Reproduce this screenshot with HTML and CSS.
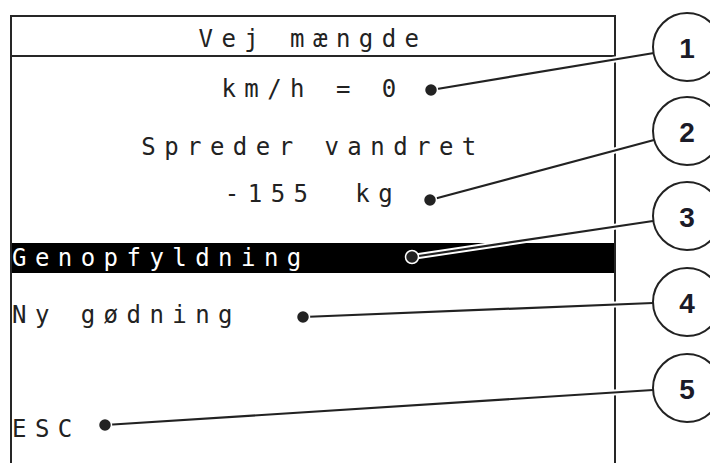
FILE: index.html
```html
<!DOCTYPE html>
<html>
<head>
    <meta charset="utf-8">
    <title>Vej mængde</title>
    <link rel="stylesheet" href="styles.css">
</head>
<body>
    <div class="figure">
        <div class="screen">
            <div class="title">Vej mængde</div>
            <div class="info">
                <div class="speed">km/h = 0</div>
                <div class="status">Spreder vandret</div>
                <div class="weight">-155 <span class="unit">kg</span></div>
            </div>
            <div class="menu">
                <div class="item selected">Genopfyldning</div>
                <div class="item">Ny gødning</div>
                <div class="item empty"></div>
                <div class="item">ESC</div>
            </div>
        </div>
        <svg class="callouts" width="710" height="463" viewBox="0 0 710 463">
            <g class="halo">
                <line x1="431" y1="90" x2="654" y2="53"/>
                <line x1="430" y1="200" x2="654" y2="140"/>
                <line x1="412" y1="257" x2="653" y2="221"/>
                <line x1="303" y1="317" x2="653" y2="303"/>
                <line x1="105" y1="425" x2="653" y2="390"/>
            </g>
            <g class="leader">
                <line x1="431" y1="90" x2="654" y2="53"/>
                <line x1="430" y1="200" x2="654" y2="140"/>
                <line x1="412" y1="257" x2="653" y2="221"/>
                <line x1="303" y1="317" x2="653" y2="303"/>
                <line x1="105" y1="425" x2="653" y2="390"/>
            </g>
            <g class="dot">
                <circle cx="431" cy="90" r="6.5"/>
                <circle cx="430" cy="200" r="6.5"/>
                <circle cx="412" cy="257" r="6.5"/>
                <circle cx="303" cy="317" r="6.5"/>
                <circle cx="105" cy="425" r="6.5"/>
            </g>
            <g class="badge">
                <circle cx="687" cy="47" r="34"/>
                <circle cx="687" cy="131" r="34"/>
                <circle cx="687" cy="216" r="34"/>
                <circle cx="687" cy="302" r="34"/>
                <circle cx="687" cy="388" r="34"/>
                <text x="687" y="58">1</text>
                <text x="687" y="142">2</text>
                <text x="687" y="227">3</text>
                <text x="687" y="313">4</text>
                <text x="687" y="399">5</text>
            </g>
        </svg>
    </div>
</body>
</html>
```

FILE: styles.css
```css
html, body {
    margin: 0;
    background: #fff;
    overflow: hidden;
}
.figure {
    position: relative;
    width: 710px;
    height: 463px;
    overflow: hidden;
}
.screen {
    margin: 15px 0 0 10px;
    width: 602px;
    height: 480px;
    border: 2px solid #262626;
    border-bottom: none;
    font-family: "DejaVu Sans Mono", monospace;
    font-size: 24px;
    letter-spacing: 8.45px;
    color: #222;
}
.title {
    box-sizing: border-box;
    height: 40px;
    line-height: 45px;
    text-align: center;
    border-bottom: 2px solid #262626;
}
.info {
    text-align: center;
    line-height: 30px;
    padding-top: 17px;
}
.status {
    margin-top: 28px;
}
.weight {
    margin-top: 17px;
}
.unit {
    margin-left: 16px;
}
.menu {
    margin-top: 34px;
    display: flex;
    flex-direction: column;
    gap: 27px;
}
.item {
    height: 30px;
    line-height: 31px;
    white-space: pre;
}
.selected {
    background: #000;
    color: #fff;
}
.callouts {
    position: absolute;
    top: 0;
    left: 0;
    pointer-events: none;
}
.halo line {
    stroke: #fff;
    stroke-width: 6;
}
.leader line {
    stroke: #222;
    stroke-width: 2.2;
}
.dot circle {
    fill: #222;
    stroke: #fff;
    stroke-width: 1.5;
}
.badge circle {
    fill: #fff;
    stroke: #222;
    stroke-width: 2;
}
.badge text {
    font-family: "Liberation Sans", Arial, sans-serif;
    font-weight: bold;
    font-size: 28px;
    fill: #1b1b28;
    text-anchor: middle;
}
```
